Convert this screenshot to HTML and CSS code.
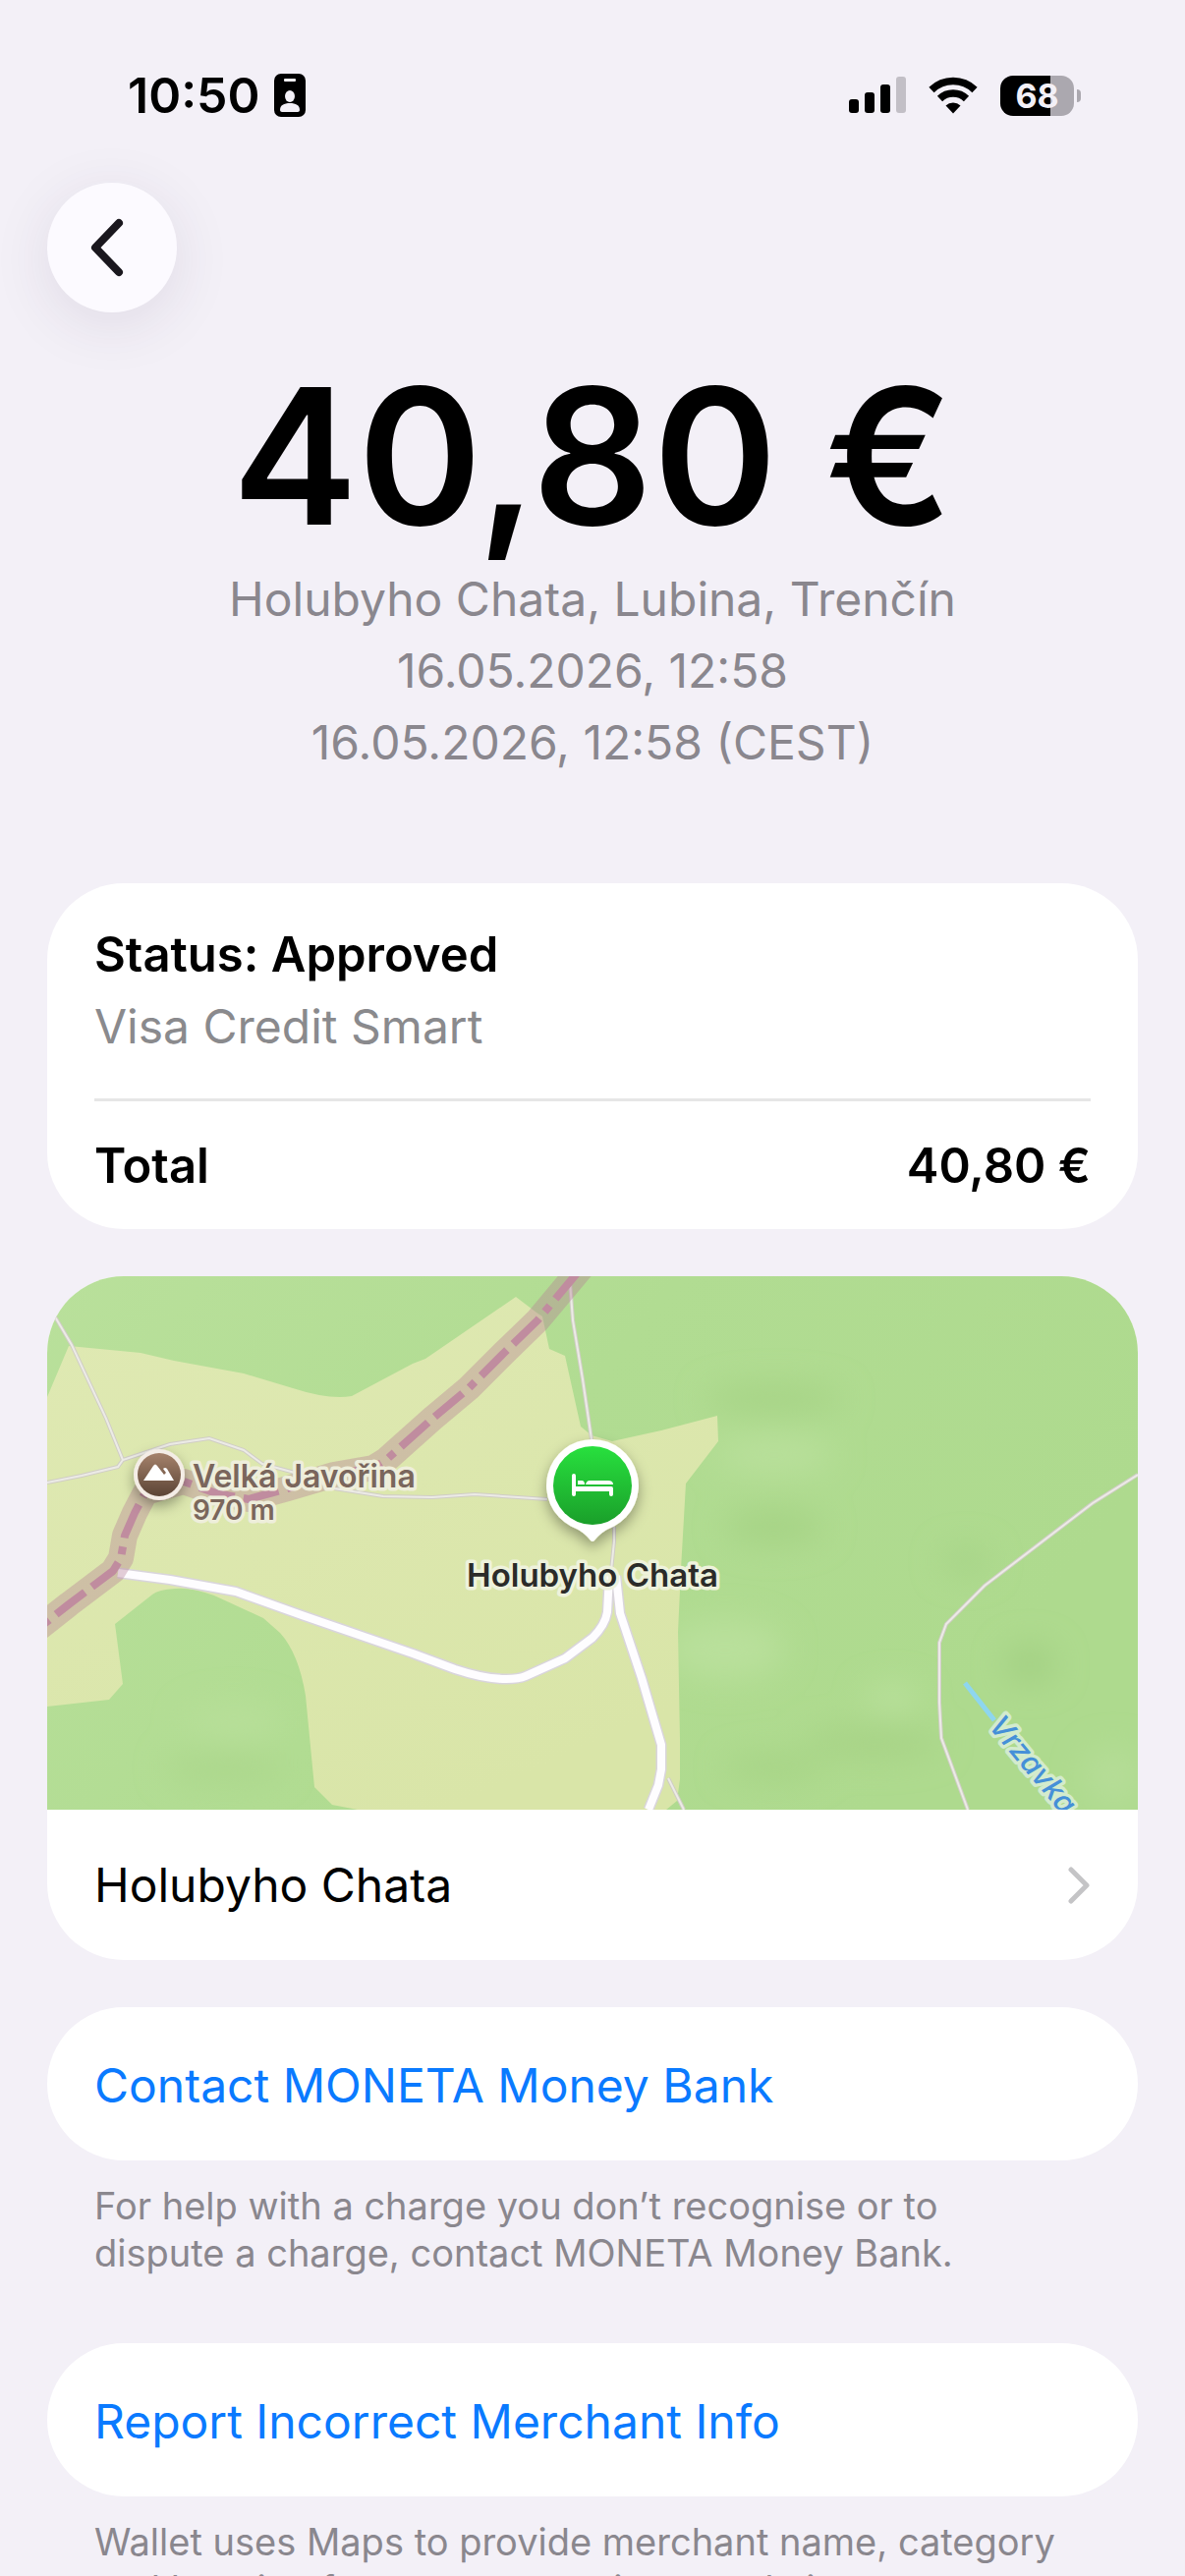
FILE: index.html
```html
<!DOCTYPE html>
<html lang="en">
<head>
  <meta charset="utf-8">
  <meta name="viewport" content="width=device-width, initial-scale=1">
  <title>Transaction</title>
  <link rel="stylesheet" href="styles.css">
</head>
<body>
  <div class="status-bar">
    <div class="status-left">
      <span class="time">10:50</span>
      <svg width="32" height="44" viewBox="0 0 32 44">
        <rect width="32" height="44" rx="7" fill="#000"/>
        <rect x="10" y="5" width="12" height="3" rx="1" fill="#f3f0f7"/>
        <ellipse cx="16" cy="23" rx="5" ry="6" fill="#f3f0f7"/>
        <path d="M6 37c0-5 4-7 10-7s10 2 10 7c0 1-1 2-2 2H8c-1 0-2-1-2-2z" fill="#f3f0f7"/>
      </svg>
    </div>
    <div class="status-right">
      <svg width="58" height="38" viewBox="0 0 58 38">
        <rect x="0" y="23" width="10" height="14" rx="3"/>
        <rect x="16" y="16" width="10" height="21" rx="3"/>
        <rect x="32" y="8" width="10" height="29" rx="3"/>
        <rect x="48" y="0" width="10" height="37" rx="3" fill="#c2bfc6"/>
      </svg>
      <svg width="52" height="38" viewBox="0 0 52 38">
        <path d="M4 13.500A31.500 31.500 0 0 1 48 13.500" fill="none" stroke="#000" stroke-width="7.500"/>
        <path d="M12.500 22.500A19.500 19.500 0 0 1 39.500 22.500" fill="none" stroke="#000" stroke-width="7.500"/>
        <path d="M18.500 29.500a11 11 0 0 1 15 0L26 37.500z"/>
      </svg>
      <div class="battery">
        <div class="battery-body">68</div>
        <div class="battery-tip"></div>
      </div>
    </div>
  </div>

  <nav class="nav">
    <button class="back" type="button" aria-label="Back">
      <svg width="36" height="60" viewBox="0 0 36 60">
        <path d="M29 5L5 30l24 25" fill="none" stroke="#1a171e" stroke-width="8" stroke-linecap="round" stroke-linejoin="round"/>
      </svg>
    </button>
  </nav>

  <main>
    <header class="summary">
      <h1>40,80 €</h1>
      <p>Holubyho Chata, Lubina, Trenčín</p>
      <p>16.05.2026, 12:58</p>
      <p>16.05.2026, 12:58 (CEST)</p>
    </header>

    <section class="card details">
      <div class="status">
        <p class="strong">Status: Approved</p>
        <p class="muted">Visa Credit Smart</p>
      </div>
      <div class="total strong">
        <span>Total</span>
        <span>40,80 €</span>
      </div>
    </section>

    <section class="card place">
      <svg class="map" viewBox="0 0 1110 543" preserveAspectRatio="xMidYMid slice">
        <defs>
          <linearGradient id="forest" x1="0" y1="0" x2="1" y2="0.400">
            <stop offset="0" stop-color="#b9e09b"/>
            <stop offset="0.500" stop-color="#b1dc92"/>
            <stop offset="1" stop-color="#aeda8e"/>
          </linearGradient>
          <linearGradient id="peak" x1="0" y1="0" x2="0" y2="1">
            <stop offset="0" stop-color="#a5826b"/>
            <stop offset="1" stop-color="#5b4435"/>
          </linearGradient>
          <linearGradient id="hotel" x1="0" y1="0" x2="0" y2="1">
            <stop offset="0" stop-color="#28e03e"/>
            <stop offset="1" stop-color="#1a9f2a"/>
          </linearGradient>
          <linearGradient id="meadow" x1="0" y1="0" x2="0.600" y2="1">
            <stop offset="0" stop-color="#dfe9b3"/>
            <stop offset="1" stop-color="#d9e5a8"/>
          </linearGradient>
          <filter id="soft" x="-50%" y="-50%" width="200%" height="200%">
            <feGaussianBlur stdDeviation="16"/>
          </filter>
          <filter id="shadow" x="-50%" y="-50%" width="200%" height="200%">
            <feDropShadow dx="0" dy="6" stdDeviation="7" flood-color="#000" flood-opacity="0.350"/>
          </filter>
        </defs>

        <rect width="1110" height="543" fill="url(#forest)"/>

        <!-- hill shading -->
        <g filter="url(#soft)">
          <ellipse cx="740" cy="125" rx="70" ry="14" fill="#a6d385"/>
          <ellipse cx="740" cy="182" rx="60" ry="18" fill="#b9e09b"/>
          <ellipse cx="740" cy="255" rx="50" ry="18" fill="#a6d385"/>
          <ellipse cx="690" cy="380" rx="60" ry="30" fill="#b9e09b"/>
          <ellipse cx="860" cy="430" rx="28" ry="14" fill="#bae19c"/>
          <ellipse cx="840" cy="475" rx="70" ry="16" fill="#a7d386"/>
          <ellipse cx="1000" cy="395" rx="26" ry="20" fill="#a3d083"/>
          <ellipse cx="935" cy="290" rx="24" ry="14" fill="#a6d387"/>
          <ellipse cx="1085" cy="510" rx="30" ry="30" fill="#b5dd97"/>
          <ellipse cx="190" cy="455" rx="50" ry="20" fill="#b7df99"/>
          <ellipse cx="180" cy="500" rx="60" ry="16" fill="#acd78c"/>
          <ellipse cx="740" cy="500" rx="50" ry="12" fill="#a6d385"/>
        </g>

        <path fill="url(#meadow)" d="M0 123L22 71L95 78L129 86L200 99L250 114Q287 126 310 122L372 89L385 84L477 21L498 37L504 41L511 74L527 81L543 153L554 162L575 168L625 157L682 142L683 168L650 211L645 298L642 362L644 473L644 512L641 534L630 543H316L290 538L272 520L263 427Q256 384 237 363L220 348L170 325Q145 316 130 318Q113 319 107 324L69 354L77 415L63 431L0 438z"/>

        <!-- footpaths -->
        <g fill="none" stroke="#d0cdc6" stroke-width="4">
          <path d="M0 30L9 43L25 70L60 145L77 187"/>
          <path d="M0 210L35 203L72 194L77 187L125 171L165 165L200 177L219 191L252 200L292 216L342 224L392 225L435 222L509 227"/>
          <path d="M532 5L535 45L545 105L554 166M577 255L577 270L574 300M632 511L648 543"/>
          <path d="M1110 202L1064 231L954 315L915 354L908 373V434L910 470L937 543"/>
        </g>
        <g fill="none" stroke="#ecebe6" stroke-width="2">
          <path d="M0 30L9 43L25 70L60 145L77 187"/>
          <path d="M0 210L35 203L72 194L77 187L125 171L165 165L200 177L219 191L252 200L292 216L342 224L392 225L435 222L509 227"/>
          <path d="M532 5L535 45L545 105L554 166M577 255L577 270L574 300M632 511L648 543"/>
          <path d="M1110 202L1064 231L954 315L915 354L908 373V434L910 470L937 543"/>
        </g>

        <!-- roads -->
        <g fill="none" stroke-linejoin="round">
          <g stroke="#d9d5dc" stroke-width="11">
            <path d="M72 302L125 309L192 321L259 345L372 384L415 400Q445 410 467 410Q480 410 487 407L527 389L555 368Q568 355 570 342L572 305"/>
            <path d="M579 305L583 343L605 409L625 477V502L622 518L612 543"/>
          </g>
          <g stroke="#fefdff" stroke-width="8">
            <path d="M72 302L125 309L192 321L259 345L372 384L415 400Q445 410 467 410Q480 410 487 407L527 389L555 368Q568 355 570 342L572 305"/>
            <path d="M579 305L583 343L605 409L625 477V502L622 518L612 543"/>
          </g>
        </g>

        <!-- border -->
        <g fill="none" stroke-linejoin="round">
          <path stroke="#b57e95" stroke-opacity="0.380" stroke-width="26" d="M-12 361L22 334L67 300L75 287L79 264L89 241L100 220L139 209L172 221L205 227L245 216L292 202L332 195L345 187L392 145L429 114L465 78L499 45L545 -10"/>
          <path stroke="#c08c9f" stroke-width="8" stroke-dasharray="37 9 37 9 8 9" stroke-dashoffset="82" d="M-12 361L22 334L67 300L75 287L79 264L89 241L100 220L139 209L172 221L205 227L245 216L292 202L332 195L345 187L392 145L429 114L465 78L499 45L545 -10"/>
        </g>

        <path d="M934 414L964 452" stroke="#8ed6ef" stroke-width="5"/>
        <text class="river" transform="translate(957 458) rotate(50)">Vrzavka</text>

        <g filter="url(#shadow)">
          <circle cx="114" cy="202" r="26" fill="#f4ede6"/>
        </g>
        <circle cx="114" cy="202" r="22" fill="url(#peak)"/>
        <path fill="#fff" d="M98 208L108 193Q110 190 112 193L119 202L121 200L118 196Q120 194 122 196L129 208z"/>
        <text class="peak-name" x="148" y="215">Velká Javořina</text>
        <text class="peak-height" x="148" y="248">970 m</text>

        <path filter="url(#shadow)" fill="#fff" d="M555 166a47 47 0 0 1 22 88.500C566 259 562 263 557 269Q555 271 553 269C548 263 544 259 533 254.500A47 47 0 0 1 555 166z"/>
        <circle cx="555" cy="213" r="40" fill="url(#hotel)"/>
        <g fill="#fff">
          <path d="M534 203a2 2 0 0 1 4 0V214H574a2 2 0 0 1 2 2V222a2 2 0 0 1-4 0V219H538V222a2 2 0 0 1-4 0z"/>
          <path d="M540 208h4q3 0 3 4h-7z"/>
          <path d="M548 212q1-4 4-4h19q5 0 5 4z"/>
        </g>
        <text class="pin-name" x="555" y="316" text-anchor="middle">Holubyho Chata</text>
      </svg>
      <a class="row" href="#place">
        <span>Holubyho Chata</span>
        <svg width="24" height="38" viewBox="0 0 24 38">
          <path d="M4 3l16 16L4 35" fill="none" stroke="#c4c4c6" stroke-width="5" stroke-linecap="round" stroke-linejoin="round"/>
        </svg>
      </a>
    </section>

    <button class="card action" type="button">Contact MONETA Money Bank</button>
    <p class="note">For help with a charge you don’t recognise or to dispute a charge, contact MONETA Money Bank.</p>

    <button class="card action" type="button">Report Incorrect Merchant Info</button>
    <p class="note">Wallet uses Maps to provide merchant name, category and location for your transactions made in</p>
  </main>
</body>
</html>
```
FILE: styles.css
```css
* {
  box-sizing: border-box;
}
body {
  margin: 0;
  height: 100vh;
  overflow: hidden;
  background-color: #f3f0f7;
  color: #000;
  font-family: Inter, "Liberation Sans", sans-serif;
  font-size: 48px;
  line-height: 73px;
}
h1, p {
  margin: 0;
}
button {
  border: none;
  font: inherit;
  cursor: pointer;
}
svg {
  display: block;
}
.status-bar {
  display: flex;
  justify-content: space-between;
  align-items: center;
  height: 134px;
  padding: 60px 106px 0 130px;
}
.status-left,
.status-right,
.battery {
  display: flex;
  align-items: center;
}
.status-left {
  gap: 14px;
}
.status-right {
  gap: 22px;
}
.time {
  font-size: 50px;
  font-weight: 600;
}
.battery {
  gap: 3px;
}
.battery-body {
  width: 75px;
  height: 41px;
  border-radius: 13px;
  background: linear-gradient(to right, #000 68%, #aba8af 68%);
  color: #f3f0f7;
  font-size: 34px;
  font-weight: 700;
  line-height: 41px;
  text-align: center;
}
.battery-tip {
  width: 4px;
  height: 13px;
  border-radius: 0 4px 4px 0;
  background-color: #aba8af;
}
.nav {
  padding: 52px 48px 0;
}
.back {
  display: flex;
  justify-content: center;
  align-items: center;
  width: 132px;
  height: 132px;
  padding: 0 8px 0 0;
  border-radius: 50%;
  background-color: #fcfaff;
  box-shadow: 0 12px 60px rgba(60, 40, 80, 0.1);
}
main {
  padding: 0 48px;
}
.summary {
  margin: 46px 0 107px;
  color: #8a878e;
  text-align: center;
}
.summary h1 {
  margin-bottom: 9px;
  color: #000;
  font-size: 192px;
  font-weight: 600;
  line-height: 200px;
}
.card {
  display: block;
  width: 100%;
  margin-bottom: 48px;
  border-radius: 78px;
  background-color: #fff;
  overflow: hidden;
}
.strong {
  font-size: 49px;
  font-weight: 600;
}
.muted {
  color: #8a8a8d;
}
.details {
  padding: 0 48px;
}
.status {
  padding: 36px 0 37px;
  border-bottom: 3px solid #e6e6e6;
}
.total {
  display: flex;
  justify-content: space-between;
  padding: 29px 0 28px;
}
.map {
  width: 100%;
  height: auto;
}
.map text {
  font-weight: 600;
  paint-order: stroke;
  stroke-linejoin: round;
  stroke-width: 7px;
}
.peak-name {
  fill: #7a665c;
  stroke: #eeeedb;
  font-size: 32px;
}
.peak-height {
  fill: #7a665c;
  stroke: #eeeedb;
  font-size: 28px;
}
.pin-name {
  fill: #2b2b29;
  stroke: #eef2dc;
  font-size: 33px;
}
.map .river {
  fill: #4590d8;
  stroke: #d3ebcd;
  font-size: 30px;
  font-style: italic;
  font-weight: 500;
}
.row {
  display: flex;
  justify-content: space-between;
  align-items: center;
  padding: 40px 48px;
  color: #000;
  text-decoration: none;
}
.action {
  margin-bottom: 22px;
  padding: 43px 48px 40px;
  color: #0a7aff;
  text-align: left;
}
.note {
  margin-bottom: 68px;
  padding: 0 72px 0 48px;
  color: #8a878e;
  font-size: 38px;
  line-height: 48px;
}
```
